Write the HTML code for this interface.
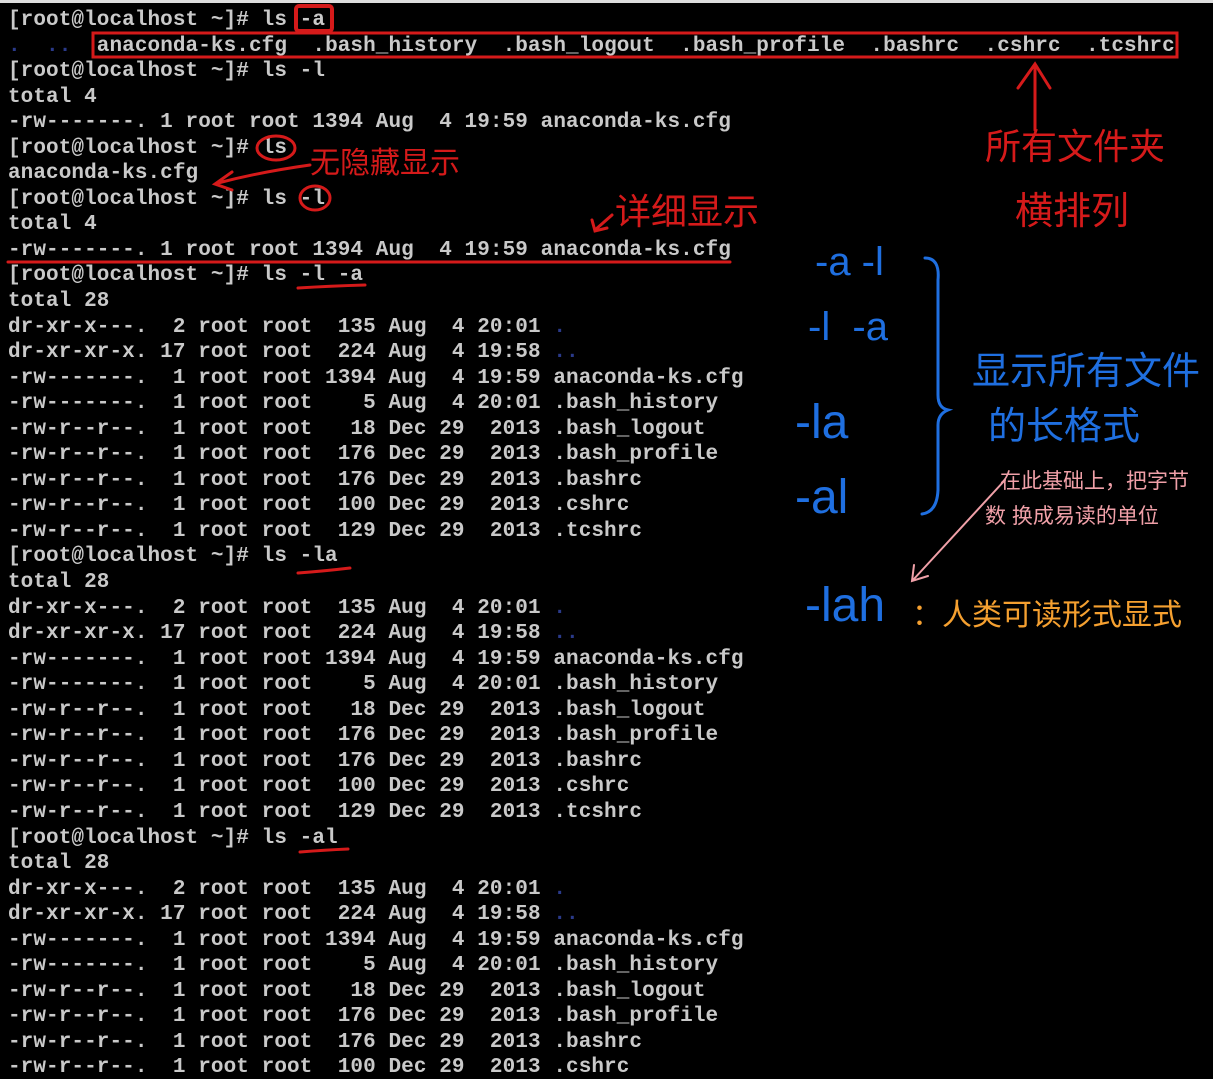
<!DOCTYPE html>
<html><head><meta charset="utf-8"><style>
html,body{margin:0;padding:0;background:#000;width:1213px;height:1079px;overflow:hidden;position:relative}
pre{position:absolute;left:8px;top:8px;margin:0;font-family:"Liberation Mono",monospace;font-size:21px;letter-spacing:0.08px;line-height:25.55px;color:#c9c9c9;font-weight:bold}
.d{color:#2a3a8a}
.hw{position:absolute;font-family:"Liberation Sans","Noto Sans CJK SC",sans-serif;white-space:nowrap}
svg{position:absolute;left:0;top:0}
</style></head><body>
<div style="position:absolute;left:0;top:0;width:1213px;height:3px;background:#ddd"></div>
<pre>[root@localhost ~]# ls -a
<span class="d">.  ..</span>  anaconda-ks.cfg  .bash_history  .bash_logout  .bash_profile  .bashrc  .cshrc  .tcshrc
[root@localhost ~]# ls -l
total 4
-rw-------. 1 root root 1394 Aug  4 19:59 anaconda-ks.cfg
[root@localhost ~]# ls
anaconda-ks.cfg
[root@localhost ~]# ls -l
total 4
-rw-------. 1 root root 1394 Aug  4 19:59 anaconda-ks.cfg
[root@localhost ~]# ls -l -a
total 28
dr-xr-x---.  2 root root  135 Aug  4 20:01 <span class="d">.</span>
dr-xr-xr-x. 17 root root  224 Aug  4 19:58 <span class="d">..</span>
-rw-------.  1 root root 1394 Aug  4 19:59 anaconda-ks.cfg
-rw-------.  1 root root    5 Aug  4 20:01 .bash_history
-rw-r--r--.  1 root root   18 Dec 29  2013 .bash_logout
-rw-r--r--.  1 root root  176 Dec 29  2013 .bash_profile
-rw-r--r--.  1 root root  176 Dec 29  2013 .bashrc
-rw-r--r--.  1 root root  100 Dec 29  2013 .cshrc
-rw-r--r--.  1 root root  129 Dec 29  2013 .tcshrc
[root@localhost ~]# ls -la
total 28
dr-xr-x---.  2 root root  135 Aug  4 20:01 <span class="d">.</span>
dr-xr-xr-x. 17 root root  224 Aug  4 19:58 <span class="d">..</span>
-rw-------.  1 root root 1394 Aug  4 19:59 anaconda-ks.cfg
-rw-------.  1 root root    5 Aug  4 20:01 .bash_history
-rw-r--r--.  1 root root   18 Dec 29  2013 .bash_logout
-rw-r--r--.  1 root root  176 Dec 29  2013 .bash_profile
-rw-r--r--.  1 root root  176 Dec 29  2013 .bashrc
-rw-r--r--.  1 root root  100 Dec 29  2013 .cshrc
-rw-r--r--.  1 root root  129 Dec 29  2013 .tcshrc
[root@localhost ~]# ls -al
total 28
dr-xr-x---.  2 root root  135 Aug  4 20:01 <span class="d">.</span>
dr-xr-xr-x. 17 root root  224 Aug  4 19:58 <span class="d">..</span>
-rw-------.  1 root root 1394 Aug  4 19:59 anaconda-ks.cfg
-rw-------.  1 root root    5 Aug  4 20:01 .bash_history
-rw-r--r--.  1 root root   18 Dec 29  2013 .bash_logout
-rw-r--r--.  1 root root  176 Dec 29  2013 .bash_profile
-rw-r--r--.  1 root root  176 Dec 29  2013 .bashrc
-rw-r--r--.  1 root root  100 Dec 29  2013 .cshrc</pre>
<svg width="1213" height="1079" fill="none" stroke-linecap="round">
<g stroke="#d51a1a" stroke-width="3">
<rect x="296" y="6" width="36" height="25" rx="3" stroke-width="4"/>
<rect x="93" y="33" width="1084" height="24"/>
<ellipse cx="276" cy="148" rx="19" ry="12"/>
<ellipse cx="315" cy="198" rx="15" ry="12"/>
<path d="M8 262 L730 262"/>
<path d="M298 288 Q330 286 365 285"/>
<path d="M298 573 Q325 571 350 568"/>
<path d="M300 852 Q325 850 348 849"/>
<path d="M1035 130 L1035 65 M1018 88 L1035 64 L1050 88"/>
<path d="M310 165 Q260 172 218 183 M232 172 L215 184 L232 190"/>
<path d="M612 215 L595 230 M592 220 L595 231 L607 228"/>
</g>
<g stroke="#1f6fe0" stroke-width="3">
<path d="M925 258 Q940 258 938 280 L938 395 Q938 408 948 410 Q938 414 938 425 L938 490 Q937 512 922 514"/>
</g>
<path d="M1005 480 L913 580 M914 565 L912 581 L928 576" stroke="#f0a0a8" stroke-width="2"/>
</svg>
<div class="hw" style="left:310px;top:138px;font-size:30px;color:#d51a1a">无隐藏显示</div>
<div class="hw" style="left:615px;top:183px;font-size:36px;color:#d51a1a">详细显示</div>
<div class="hw" style="left:985px;top:118px;font-size:36px;color:#d51a1a">所有文件夹</div>
<div class="hw" style="left:1015px;top:180px;font-size:38px;color:#d51a1a">横排列</div>
<div class="hw" style="left:815px;top:240px;font-size:40px;color:#1f6fe0">-a -l</div>
<div class="hw" style="left:808px;top:305px;font-size:40px;color:#1f6fe0">-l &nbsp;-a</div>
<div class="hw" style="left:795px;top:395px;font-size:48px;color:#1f6fe0">-la</div>
<div class="hw" style="left:795px;top:470px;font-size:48px;color:#1f6fe0">-al</div>
<div class="hw" style="left:972px;top:340px;font-size:38px;color:#1f6fe0">显示所有文件</div>
<div class="hw" style="left:988px;top:395px;font-size:38px;color:#1f6fe0">的长格式</div>
<div class="hw" style="left:1000px;top:465px;font-size:21px;color:#f0a0a8">在此基础上，把字节</div>
<div class="hw" style="left:985px;top:500px;font-size:21px;color:#f0a0a8">数 换成易读的单位</div>
<div class="hw" style="left:805px;top:578px;font-size:48px;color:#1f6fe0">-lah</div>
<div class="hw" style="left:912px;top:590px;font-size:30px;color:#f5a030">：人类可读形式显式</div>
</body></html>
